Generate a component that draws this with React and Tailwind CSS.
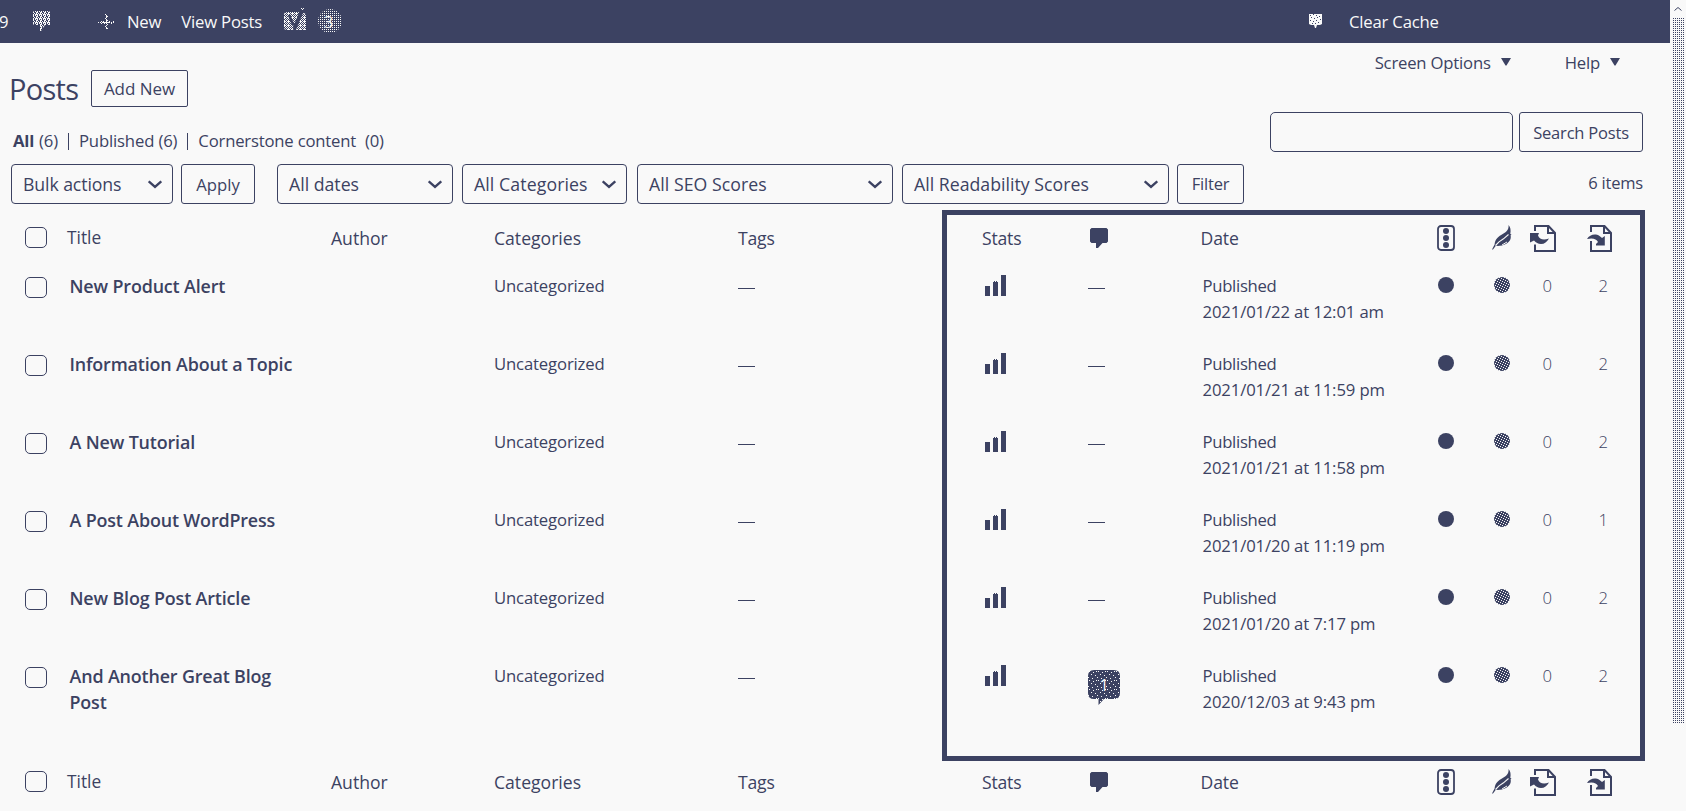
import React from "react";

const COLS = "grid grid-cols-[25px_42px_264px_163px_244px_244px_107.5px_111px_234px_55px_41px_54px_60px]";

const posts = [
  { title: "New Product Alert", date: "2021/01/22 at 12:01 am", outgoing: 2 },
  { title: "Information About a Topic", date: "2021/01/21 at 11:59 pm", outgoing: 2 },
  { title: "A New Tutorial", date: "2021/01/21 at 11:58 pm", outgoing: 2 },
  { title: "A Post About WordPress", date: "2021/01/20 at 11:19 pm", outgoing: 1 },
  { title: "New Blog Post Article", date: "2021/01/20 at 7:17 pm", outgoing: 2 },
  { title: "And Another Great Blog Post", date: "2020/12/03 at 9:43 pm", outgoing: 2, comments: 1 },
];

const filters = [
  { label: "All dates", box: "w-[176px]", text: "tracking-[0px]" },
  { label: "All Categories", box: "ml-[9px] w-[165px]", text: "tracking-[0.1px]" },
  { label: "All SEO Scores", box: "ml-[10px] w-[256px]", text: "tracking-[0.05px]" },
  { label: "All Readability Scores", box: "ml-[9px] w-[267px]", text: "tracking-[0.02px]" },
];

/* Shared two-tone stipple fills */
function Patterns() {
  return (
    <svg width="0" height="0" className="absolute" shapeRendering="crispEdges">
      <defs>
        <pattern id="stipple-light" width="5" height="5" patternUnits="userSpaceOnUse">
          <rect width="5" height="5" fill="#3c4262" />
          <path d="M0 0h1v1H0zM2 1h1v1H2zM4 2h1v1H4zM1 3h1v1H1zM3 4h1v1H3z" fill="#f9f9f9" />
        </pattern>
        <pattern id="stipple-sparse" width="9" height="9" patternUnits="userSpaceOnUse">
          <rect width="9" height="9" fill="#3c4262" />
          <path d="M1 1h1v1H1zM5 2h1v1H5zM3 4h1v1H3zM7 5h1v1H7zM0 7h1v1H0zM4 8h1v1H4zM8 1h1v1H8z" fill="#f9f9f9" />
        </pattern>
        <pattern id="stipple-bar" width="4" height="4" patternUnits="userSpaceOnUse">
          <path d="M0 0h1v2H0zM2 0h1v1H2zM1 2h1v1H1zM3 1h1v3H3zM2 3h1v1H2zM0 3h1v1H0z" fill="#f9f9f9" />
        </pattern>
        <pattern id="stipple-dense" width="4" height="4" patternUnits="userSpaceOnUse">
          <path d="M0 0h1v1H0zM1 1h1v1H1zM3 1h1v1H3zM2 0h1v1H2zM0 2h1v1H0zM2 2h1v1H2zM1 3h1v1H1zM3 3h1v1H3zM0 1h1v1H0z" fill="#f9f9f9" />
        </pattern>
        <pattern id="stipple-dots" width="2" height="2" patternUnits="userSpaceOnUse">
          <rect width="1" height="1" fill="#f9f9f9" />
        </pattern>
      </defs>
    </svg>
  );
}

function Chevron() {
  return (
    <svg width="14" height="9" viewBox="0 0 14 9" fill="none" className="shrink-0">
      <path d="M0.700 1.300 7 7 13.300 1.300" stroke="#3c4262" strokeWidth="2.400" />
    </svg>
  );
}

function Select({ label, box, text }) {
  return (
    <div className={`flex h-[40px] items-center justify-between rounded-[4px] border border-[#3c4262] pl-[11px] pr-[10px] ${box}`}>
      <span className={`text-[17.7px] leading-[24px] ${text}`}>{label}</span>
      <Chevron />
    </div>
  );
}

function Checkbox({ className }) {
  return <span className={`block h-[21px] w-[22px] rounded-[5px] border border-[#3c4262] ${className}`} />;
}

function CommentIcon() {
  return (
    <svg width="18" height="20" viewBox="0 0 18 20" fill="#3c4262">
      <path d="M1.5 0h15L18 1.500v12L16.500 15h-4L8 20H6v-5H1.500L0 13.500V1.500z" />
    </svg>
  );
}

function LightsIcon() {
  return (
    <svg width="18" height="26" viewBox="0 0 18 26">
      <rect x="1" y="1" width="16" height="24" rx="3" fill="none" stroke="#3c4262" strokeWidth="1.8" />
      <circle cx="9" cy="6" r="3" fill="#3c4262" />
      <circle cx="9" cy="13" r="3" fill="#3c4262" />
      <circle cx="9" cy="20" r="3" fill="#3c4262" />
    </svg>
  );
}

function FeatherIcon() {
  return (
    <svg width="20" height="25" viewBox="0 0 20 25">
      <path d="M16.500 0C17 4 15 6.500 11.500 8.500C6 11.500 3 14.500 2.600 19.500L0 24.500L1 24.500L3.800 20.800C10.500 21.500 17 18.500 18.500 14C19 12 18.800 11 18.500 10.500L19.500 9.500L18.300 9C19 5 18.500 2 16.500 0z" fill="#3c4262" />
      <path d="M3.500 20.500 7 16.800 11.500 13.800 16.500 9.500" fill="none" stroke="#f9f9f9" strokeWidth="1.100" />
      <path d="M10 20 15 17" fill="none" stroke="#f9f9f9" strokeWidth="1" />
    </svg>
  );
}

function IncomingIcon() {
  return (
    <svg width="26" height="27" viewBox="0 0 26 27">
      <path d="M5 6V1H18.500L25 8V26H5V19.500" fill="none" stroke="#3c4262" strokeWidth="2" />
      <path d="M18 1V8H25" fill="none" stroke="#3c4262" strokeWidth="2" />
      <path d="M0 8H9L8 10.500C9.500 14 13 16 19 13.500C17 17 14.500 19 11 19C8 19 6 17.500 4 15.500L0 17.500z" fill="#3c4262" />
    </svg>
  );
}

function OutgoingIcon() {
  return (
    <svg width="25" height="27" viewBox="0 0 25 27">
      <path d="M4 7V1H17.500L24 8V26H4V16" fill="none" stroke="#3c4262" strokeWidth="2" />
      <path d="M17 1V8H24" fill="none" stroke="#3c4262" strokeWidth="2" />
      <path d="M0 14C2 10.500 5.500 9 9 9.500C12 10 13.500 11.500 15 13L17.800 11V20.500H9V19L11 17C9.500 14 6 12.500 0 14z" fill="#3c4262" />
    </svg>
  );
}

function StatsIcon() {
  return (
    <svg width="21" height="21" viewBox="0 0 21 21" fill="#3c4262" shapeRendering="crispEdges">
      <path d="M0 11h5v10H0zM8 7h5v14H8zM16 0h5v21h-5zM9 6h1v1H9zM11 6h1v1h-1z" />
    </svg>
  );
}

function HeadRow({ className }) {
  return (
    <div className={`${COLS} items-start text-[17.6px] leading-[24px] ${className}`}>
      <span />
      <Checkbox className="mt-[1px]" />
      <span className="text-[17.3px]">Title</span>
      <span>Author</span>
      <span>Categories</span>
      <span className="tracking-[-0.2px]">Tags</span>
      <span className="tracking-[-0.2px]">Stats</span>
      <span className="mt-[2px] pl-[0.500px]"><CommentIcon /></span>
      <span className="tracking-[-0.1px]">Date</span>
      <span className="-mt-px pl-[2px]"><LightsIcon /></span>
      <span className="-mt-px pl-[2px]"><FeatherIcon /></span>
      <span className="-ml-[1px] -mt-px"><IncomingIcon /></span>
      <span className="-mt-px pl-[2px]"><OutgoingIcon /></span>
    </div>
  );
}

function PostRow({ post, className }) {
  return (
    <div className={`${COLS} items-start pt-[11px] text-[16.7px] leading-[26px] tracking-[-0.15px] ${className}`}>
      <span />
      <Checkbox className="mt-[4px]" />
      <span className="w-[235px] pl-[2.500px] text-[17.900px] font-semibold tracking-[-0.150px]">{post.title}</span>
      <span />
      <span>Uncategorized</span>
      <span className="mt-[15px] h-px w-[17px] bg-[#3c4262]" />
      <span className="mt-[2px] pl-[3px]"><StatsIcon /></span>
      {post.comments ? (
        <span className="relative -ml-[1.500px] mt-[7px] block h-[36px] w-[32px]">
          <svg width="32" height="36" viewBox="0 0 32 36">
            <path d="M6 0H26Q32 0 32 6V23Q32 29 26 29H16L10.500 35V29H6Q0 29 0 23V6Q0 0 6 0z" fill="url(#stipple-sparse)" />
          </svg>
          <span className="absolute inset-x-0 top-[2px] text-center text-[16px] leading-[26px] text-[#f9f9f9]">{post.comments}</span>
        </span>
      ) : (
        <span className="-ml-[1.500px] mt-[15px] h-px w-[17px] bg-[#3c4262]" />
      )}
      <span className="pl-[2px]">
        <span className="block tracking-[-0.3px]">Published</span>
        <span className="block whitespace-nowrap tracking-[-0.120px]">{post.date}</span>
      </span>
      <span className="ml-[3px] mt-[4px] h-[16px] w-[16px] rounded-full bg-[#3c4262]" />
      <svg className="ml-[4px] mt-[4px]" width="16" height="16"><circle cx="8" cy="8" r="8" fill="url(#stipple-light)" /></svg>
      <span className="pl-[12px] font-light">0</span>
      <span className="pl-[14px] font-light">{post.outgoing}</span>
    </div>
  );
}

function TopBar() {
  return (
    <div className="flex h-[43px] items-start bg-[#3c4262] pt-[10px] text-[16.7px] leading-[24px] tracking-[-0.2px] text-[#f9f9f9]">
      <span className="-ml-px w-[34px]">9</span>
      <svg className="mt-[1px]" width="17" height="20" viewBox="0 0 17 20">
        <path d="M1 0H16L17 1V14H12L8 20H7V14H1L0 13V1z" fill="url(#stipple-bar)" />
      </svg>
      <svg className="ml-[48px] mt-[4px]" width="17" height="17" viewBox="0 0 17 17" shapeRendering="crispEdges" fill="#f9f9f9">
        <path d="M8 1h1v3H8zM8 5h1v5H8zM8 11h1v1H8zM8 13h1v2H8zM0 8h1v1H0zM2 8h1v1H2zM4 8h8v1H4zM13 8h1v1h-1zM15 8h1v1h-1zM7 0h1v1H7zM9 2h1v1H9zM7 4h1v1H7zM9 6h1v1H9zM3 7h1v1H3zM5 7h1v1H5zM11 7h1v1h-1zM13 9h1v1h-1zM3 9h1v1H3zM6 9h1v1H6zM9 10h1v1H9zM7 12h1v1H7zM9 14h1v1H9zM15 7h1v1h-1z" />
      </svg>
      <span className="ml-[12px]">New</span>
      <span className="ml-[20px] tracking-[-0.200px]">View Posts</span>
      <svg className="ml-[22px] -mt-[2px]" width="22" height="24" viewBox="0 0 22 24">
        <path d="M3 4H15L9.500 21Q9 22 8 22H3Q0 22 0 19V7Q0 4 3 4z" fill="url(#stipple-dense)" />
        <path d="M19 5Q22 5 22 8V22H12L19 5z" fill="url(#stipple-dense)" />
        <path d="M5 7 9.500 17.500M16.500 5 10 20" stroke="#3c4262" strokeWidth="2.600" fill="none" />
        <path d="M17 0h1v1h-1zM19 0h1v1h-1zM18 1h1v1h-1z" fill="#f9f9f9" />
      </svg>
      <span className="relative ml-[12px] -mt-px block h-[24px] w-[24px]">
        <svg width="24" height="24" viewBox="0 0 24 24"><circle cx="12" cy="12" r="12" fill="url(#stipple-dots)" /></svg>
        <span className="absolute inset-0 pr-[3px] text-center text-[16px] leading-[26px]">3</span>
      </span>
      <svg className="ml-[967px] mt-[4px]" width="13" height="14" viewBox="0 0 13 14">
        <path d="M0 0H13V10L11 11H8L7 14H6L5 11H2L0 10z" fill="#f9f9f9" />
        <path d="M1 1h1v1H1zM4 0h1v1H4zM7 1h1v1H7zM10 2h1v1h-1zM2 3h1v1H2zM5 4h1v1H5zM8 3h1v1H8zM11 5h1v1h-1zM1 6h1v1H1zM4 7h1v1H4zM7 6h1v1H7zM9 8h1v1H9zM3 9h1v1H3zM6 9h1v1H6z" fill="#3c4262" />
      </svg>
      <span className="ml-[27px] tracking-[-0.200px]">Clear Cache</span>
    </div>
  );
}

function MetaToggle({ label }) {
  return (
    <span className="flex items-start">
      {label}
      <svg className="ml-[10px] mt-[7px]" width="10" height="8" viewBox="0 0 10 8" fill="#3c4262"><path d="M0 0H10L5.500 7.500H4.500z" /></svg>
    </span>
  );
}

export default function App() {
  return (
    <div className="flex h-[811px] w-[1686px] overflow-hidden bg-[#f9f9f9] font-['Open_Sans','Noto_Sans',sans-serif] text-[#3c4262]">
      <Patterns />
      <main className="relative w-[1670px] shrink-0">
        <TopBar />

        <div className="flex h-[121px] justify-between pl-[11px] pr-[27px]">
          <div className="pt-[27px]">
            <div className="flex h-[37px] items-start">
              <h1 className="-ml-[2px] w-[82px] pt-px text-[29px] leading-[36px] tracking-[-0.7px]">Posts</h1>
              <button className="h-[37px] w-[97px] rounded-[2px] border border-[#3c4262] pt-px text-[17px] font-medium leading-[34px] tracking-[-0.050px]">Add New</button>
            </div>
            <div className="mt-[22px] flex text-[16.7px] leading-[24px] tracking-[-0.2px] whitespace-pre pl-[2px]">
              <b className="tracking-[-0.2px]">All</b>
              <span className="ml-[5px]">(6)</span>
              <span className="mx-[10px] mt-[4px] h-[17px] w-px bg-[#3c4262]" />
              <span className="tracking-[-0.150px]">Published (6)</span>
              <span className="mx-[10px] mt-[4px] h-[17px] w-px bg-[#3c4262]" />
              <span className="tracking-[-0.2px]">Cornerstone content</span>
              <span className="ml-[9px]">(0)</span>
            </div>
          </div>
          <div className="flex flex-col items-end">
            <div className="flex gap-[54px] pr-[23px] pt-[8px] text-[16.7px] leading-[24px] tracking-[-0.2px]">
              <MetaToggle label="Screen Options" />
              <MetaToggle label="Help" />
            </div>
            <div className="mt-[37px] flex gap-[6px]">
              <div className="h-[40px] w-[243px] rounded-[5px] border border-[#3c4262]" />
              <button className="h-[40px] w-[124px] rounded-[3px] border border-[#3c4262] pt-[3px] text-[16.5px] tracking-[-0.2px]">Search Posts</button>
            </div>
          </div>
        </div>

        <div className="flex h-[49px] items-start pl-[11px] pr-[27px]">
          <Select label="Bulk actions" box="w-[162px]" text="tracking-[-0.1px]" />
          <button className="ml-[8px] mr-[22px] h-[40px] w-[74px] rounded-[3px] border border-[#3c4262] pt-px text-[16.7px]">Apply</button>
          {filters.map((f) => <Select key={f.label} {...f} />)}
          <button className="ml-[8px] h-[40px] w-[67px] rounded-[3px] border border-[#3c4262] pt-px text-[16.500px] tracking-[-0.2px]">Filter</button>
          <span className="ml-auto mt-[7px] text-[16.5px] leading-[24px] tracking-[-0.2px]">6 items</span>
        </div>

        <HeadRow className="h-[49px] pt-[13px]" />
        {posts.map((post, i) => <PostRow key={post.title} post={post} className={i === posts.length - 1 ? "h-[105px]" : "h-[78px]"} />)}
        <HeadRow className="h-[50px] pt-[13px]" />

        <div className="pointer-events-none absolute left-[942px] top-[210px] h-[551px] w-[703px] border-[5px] border-[#3c4262]" />
      </main>

      <aside className="flex w-[16px] flex-col items-center">
        <svg className="mt-[7px]" width="8" height="4" viewBox="0 0 8 4" fill="none"><path d="M0.500 3.500 4 0.500 7.500 3.500" stroke="#3c4262" /></svg>
        <div className="mt-[7px] h-[705px] w-[11px] bg-[conic-gradient(#f9f9f9_75%,#3c4262_0)] bg-[length:2px_2px]" />
      </aside>
    </div>
  );
}
